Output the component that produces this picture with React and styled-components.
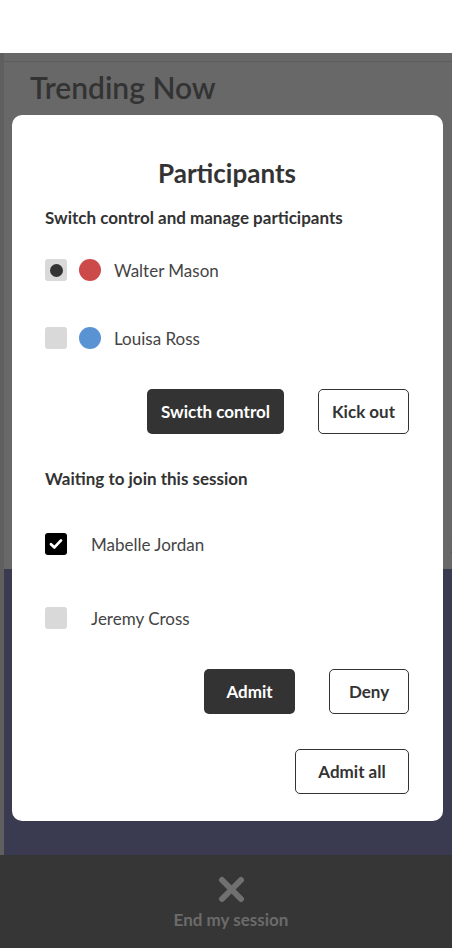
import styled, { createGlobalStyle } from "styled-components";

const Global = createGlobalStyle`
  html, body {
    margin: 0;
    padding: 0;
    background: #ffffff;
    overflow: hidden;
  }
  * { box-sizing: border-box; }
  body {
    font-family: Lato, "Open Sans", "Liberation Sans", sans-serif;
    color: #333333;
  }
`;

const Page = styled.div`
  width: 452px;
  height: 948px;
  position: relative;
  display: flex;
  flex-direction: column;
  overflow: hidden;
`;

const Header = styled.div`
  height: 53px;
  background: #ffffff;
  flex-shrink: 0;
`;

const Dimmed = styled.div`
  flex: 1;
  display: flex;
  background: #5f5f5f;
  padding-left: 4px;
`;

const Content = styled.div`
  flex: 1;
  display: flex;
  flex-direction: column;
  background: #686868;
`;

const TopRule = styled.div`
  height: 9px;
  border-bottom: 1px solid #5d5d5d;
`;

const Heading = styled.h1`
  margin: 0;
  padding: 0 0 0 26px;
  height: 48px;
  line-height: 50px;
  font-size: 30px;
  font-weight: 600;
  color: #333333;
  white-space: nowrap;
`;

const Spacer = styled.div`
  flex: 1;
`;

const SectionTitle = styled.div`
  text-align: right;
  margin-right: -40px;
  height: 40px;
  font-size: 26px;
  font-weight: 600;
  color: #4e4e4e;
  white-space: nowrap;
`;

const Navy = styled.div`
  height: 286px;
  background: #3a3b50;
`;

const BottomBar = styled.div`
  height: 93px;
  flex-shrink: 0;
  background: #363636;
  display: flex;
  flex-direction: column;
  align-items: center;
  padding: 21px 0 0 10px;
  gap: 6px;
`;

const EndLabel = styled.span`
  font-size: 17px;
  font-weight: 700;
  color: #6b6b6b;
`;

const Modal = styled.div`
  position: absolute;
  top: 115px;
  left: 12px;
  width: 431px;
  height: 706px;
  background: #ffffff;
  border-radius: 10px;
  padding: 42px 34px 0 33px;
  display: flex;
  flex-direction: column;
`;

const Title = styled.h2`
  margin: 0;
  text-align: center;
  font-size: 26px;
  line-height: 32px;
  font-weight: 700;
  color: #333333;
`;

const Subtitle = styled.h3`
  margin: ${(p) => p.$top}px 0 0;
  font-size: 17px;
  line-height: 20px;
  font-weight: 700;
  color: #333333;
`;

const List = styled.div`
  display: flex;
  flex-direction: column;
  gap: ${(p) => p.$gap}px;
  margin-top: ${(p) => p.$top}px;
`;

const Row = styled.div`
  display: flex;
  align-items: center;
  height: 22px;
`;

const Check = styled.div`
  width: 22px;
  height: 22px;
  border-radius: 3px;
  background: ${(p) => (p.$checked ? "#000000" : "#d9d9d9")};
  display: flex;
  align-items: center;
  justify-content: center;
  flex-shrink: 0;
`;

const Dot = styled.span`
  width: 13px;
  height: 13px;
  border-radius: 50%;
  background: #333333;
`;

const Avatar = styled.span`
  width: 22px;
  height: 22px;
  border-radius: 50%;
  background: ${(p) => p.$color};
  margin-left: 12px;
  flex-shrink: 0;
`;

const Name = styled.span`
  margin-left: ${(p) => p.$gap}px;
  font-size: 17px;
  color: #444444;
`;

const Actions = styled.div`
  display: flex;
  justify-content: flex-end;
  gap: 34px;
  margin-top: ${(p) => p.$top}px;
`;

const Button = styled.button`
  height: 45px;
  width: ${(p) => p.$w}px;
  border-radius: 5px;
  font-family: inherit;
  font-size: 17px;
  font-weight: 700;
  cursor: pointer;
  background: ${(p) => (p.$solid ? "#333333" : "#ffffff")};
  color: ${(p) => (p.$solid ? "#ffffff" : "#333333")};
  border: ${(p) => (p.$solid ? "none" : "1.5px solid #333333")};
  padding: 0;
`;

const Tick = () => (
  <svg width="14" height="12" viewBox="0 0 14 12">
    <path
      d="M2 6.2 L5.4 9.4 L12 2.4"
      fill="none"
      stroke="#ffffff"
      strokeWidth="2.8"
      strokeLinecap="round"
      strokeLinejoin="round"
    />
  </svg>
);

const CloseIcon = () => (
  <svg width="27" height="27" viewBox="0 0 27 27">
    <path
      d="M4 4 L23 23 M23 4 L4 23"
      stroke="#707070"
      strokeWidth="6"
      strokeLinecap="round"
    />
  </svg>
);

const participants = [
  { name: "Walter Mason", color: "#cc4a4a", selected: true },
  { name: "Louisa Ross", color: "#5a93d4", selected: false },
];

const waiting = [
  { name: "Mabelle Jordan", checked: true },
  { name: "Jeremy Cross", checked: false },
];

export default function App() {
  return (
    <>
      <Global />
      <Page>
        <Header />
        <Dimmed>
          <Content>
            <TopRule />
            <Heading>Trending Now</Heading>
            <Spacer />
            <SectionTitle>See</SectionTitle>
            <Navy />
          </Content>
        </Dimmed>
        <BottomBar>
          <CloseIcon />
          <EndLabel>End my session</EndLabel>
        </BottomBar>

        <Modal>
          <Title>Participants</Title>
          <Subtitle $top={19}>Switch control and manage participants</Subtitle>
          <List $top={31} $gap={46}>
            {participants.map((p) => (
              <Row key={p.name}>
                <Check>{p.selected && <Dot />}</Check>
                <Avatar $color={p.color} />
                <Name $gap={13}>{p.name}</Name>
              </Row>
            ))}
          </List>
          <Actions $top={40}>
            <Button $solid $w={137}>Swicth control</Button>
            <Button $w={91}>Kick out</Button>
          </Actions>

          <Subtitle $top={35}>Waiting to join this session</Subtitle>
          <List $top={44} $gap={52}>
            {waiting.map((w) => (
              <Row key={w.name}>
                <Check $checked={w.checked}>{w.checked && <Tick />}</Check>
                <Name $gap={24}>{w.name}</Name>
              </Row>
            ))}
          </List>
          <Actions $top={40}>
            <Button $solid $w={91}>Admit</Button>
            <Button $w={80}>Deny</Button>
          </Actions>
          <Actions $top={35}>
            <Button $w={114}>Admit all</Button>
          </Actions>
        </Modal>
      </Page>
    </>
  );
}
